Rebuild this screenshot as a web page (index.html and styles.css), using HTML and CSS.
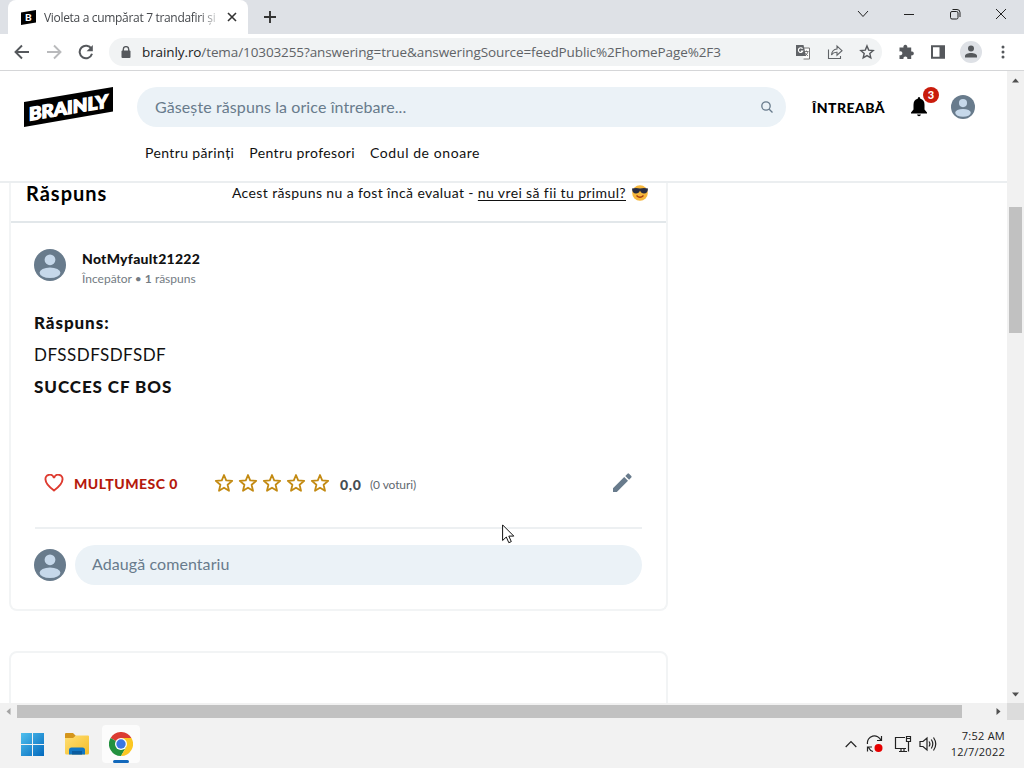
FILE: index.html
```html
<!DOCTYPE html>
<html lang="ro">

<head>
    <meta charset="UTF-8">
    <meta name="viewport" content="width=device-width, initial-scale=1.0">
    <title>Brainly</title>
    <link rel="stylesheet" href="styles.css">
</head>

<body>
    <!-- shared icons -->
    <svg hidden>
        <symbol id="avatar" viewBox="0 0 32 32">
            <circle cx="16" cy="16" r="16" fill="#687b8c" />
            <circle cx="16" cy="10.8" r="5.4" fill="#c6d8ea" />
            <ellipse cx="16" cy="23.8" rx="10.4" ry="5.3" fill="#c6d8ea" />
        </symbol>
        <symbol id="star" viewBox="0 0 20 20">
            <path d="M10 2l2.2 5.400 6 .5-4.600 3.900 1.400 6L10 14.700l-5 3.100 1.400-6L1.800 7.900l6-.5z" fill="none" stroke="#c38a12" stroke-width="1.800" stroke-linejoin="round" />
        </symbol>
    </svg>

    <div class="window">
        <div class="tabstrip">
            <div class="tab">
                <svg class="favicon" width="15" height="15" viewBox="0 0 15 15">
                    <path d="M0 2.500L15 0v12.500L0 15z" />
                    <text x="4" y="11.300">B</text>
                </svg>
                <span class="tab-title">Violeta a cumpărat 7 trandafiri și</span>
                <svg width="10" height="10" viewBox="0 0 10 10"><path d="M1 1l8 8M9 1L1 9" stroke="#333" stroke-width="1.600" /></svg>
            </div>
            <svg class="new-tab" width="14" height="14" viewBox="0 0 14 14"><path d="M7 1v12M1 7h12" stroke="#333" stroke-width="1.900" /></svg>
            <div class="window-buttons">
                <svg width="12" height="12" viewBox="0 0 12 12"><path d="M1 3l5 5.500L11 3" /></svg>
                <svg width="12" height="12" viewBox="0 0 12 12"><path d="M1 6.500h10" /></svg>
                <svg width="12" height="12" viewBox="0 0 12 12"><rect x="1.500" y="3.500" width="7.500" height="7.500" rx="1.500" /><path d="M3.500 1.500H8q3 0 3 3V9" /></svg>
                <svg width="12" height="12" viewBox="0 0 12 12"><path d="M1 1l10 10M11 1L1 11" /></svg>
            </div>
        </div>

        <div class="toolbar">
            <svg width="16" height="16" viewBox="0 0 16 16"><path d="M15 8H2M8 1.500L1.500 8 8 14.500" fill="none" stroke="#55585c" stroke-width="1.900" /></svg>
            <svg width="16" height="16" viewBox="0 0 16 16"><path d="M1 8h13M8 1.500L14.500 8 8 14.500" fill="none" stroke="#b9babc" stroke-width="1.900" /></svg>
            <svg width="16" height="16" viewBox="0 0 16 16"><path d="M13.400 4.800A6.300 6.300 0 1 0 14 9.800" fill="none" stroke="#55585c" stroke-width="2" /><path d="M14.800 1v6.200H8.600z" fill="#55585c" /></svg>
            <div class="omnibox">
                <svg width="10" height="12" viewBox="0 0 10 12"><path d="M2.300 5V3.300a2.700 2.700 0 0 1 5.400 0V5" fill="none" stroke="#55585c" stroke-width="1.400" /><rect x=".5" y="4.500" width="9" height="7.500" rx="1" fill="#55585c" /></svg>
                <div class="url"><b>brainly.ro</b>/tema/10303255?answering=true&amp;answeringSource=feedPublic%2FhomePage%2F3</div>
                <div class="omnibox-icons">
                    <svg width="16" height="16" viewBox="0 0 16 16">
                        <path d="M6 4h8.500v11H8.500" fill="#fff" stroke="#777" />
                        <path d="M1 1h7.500l2.500 11H1z" fill="#606367" />
                        <path d="M7.600 4.800a2.300 2.300 0 1 0 .2 2.300H5.800" fill="none" stroke="#fff" stroke-width="1.100" />
                        <path d="M9.500 7.500h4M11.500 6.500v1M13 7.500q-.5 3-3 4.500M10.500 9q1 2 2.500 3" fill="none" stroke="#666" stroke-width=".8" />
                    </svg>
                    <svg width="16" height="16" viewBox="0 0 16 16"><path d="M1.500 5.500v9h12V12M4.500 11q.5-5.500 5.500-6V2l5 4.700-5 4.500V8.300q-3.500-.3-5.500 2.700z" fill="none" stroke="#606367" stroke-width="1.100" /></svg>
                    <svg width="16" height="16" viewBox="0 0 16 16"><path d="M8 1.900l1.700 4.200 4.500.4-3.400 3 1 4.400L8 11.600l-3.800 2.300 1-4.400-3.400-3 4.500-.4z" fill="none" stroke="#55585c" stroke-width="1.400" /></svg>
                </div>
            </div>
            <div class="extensions">
                <svg width="16" height="16" viewBox="0 0 16 16"><path d="M1.500 3.500h4a2 2 0 1 1 3.700 0h4v4a2 2 0 1 1 0 3.800V15H9.300a2 2 0 1 0-3.800 0h-4v-4a2 2 0 1 0 0-3.600z" fill="#55585c" /></svg>
                <svg width="14" height="14" viewBox="0 0 14 14"><path d="M1 1.200h12v11.600H1z" fill="none" stroke="#55585c" stroke-width="2" /><path d="M8.500 1H13v12H8.500z" fill="#55585c" /></svg>
                <svg width="22" height="22" viewBox="0 0 22 22"><circle cx="11" cy="11" r="11" fill="#dee1e6" /><circle cx="11" cy="7.600" r="3" fill="#55585c" /><path d="M5 16.500v-1.600c0-4 12-4 12 0v1.600z" fill="#55585c" /></svg>
                <svg class="menu" width="4" height="14" viewBox="0 0 4 14" fill="#55585c"><circle cx="2" cy="2" r="1.500" /><circle cx="2" cy="7" r="1.500" /><circle cx="2" cy="12" r="1.500" /></svg>
            </div>
        </div>

        <div class="viewport">
            <div class="page">
                <header class="site-header">
                    <div class="header-top">
                        <svg class="logo" width="90" height="40" viewBox="0 0 90 40">
                            <path d="M0 15L89 0v24.500L0 40z" />
                            <text x="5" y="34.500" textLength="79" lengthAdjust="spacingAndGlyphs" transform="skewY(-9.600)">BRAINLY</text>
                        </svg>
                        <div class="search">
                            <span>Găsește răspuns la orice întrebare...</span>
                            <svg width="14" height="14" viewBox="0 0 14 14"><circle cx="6" cy="6" r="4.200" /><path d="M9.200 9.200l3.300 3.300" /></svg>
                        </div>
                        <a class="ask">ÎNTREABĂ</a>
                        <div class="bell">
                            <svg width="16" height="20" viewBox="0 0 16 20"><path d="M8 0q1.300 0 1.300 1.800 4.200 1.200 4.200 6v4.700L16 15.500v1H0v-1l2.500-3V7.800q0-4.800 4.200-6Q6.700 0 8 0zM6 17.500h4q-.4 1.700-2 1.700t-2-1.700z" /></svg>
                            <span class="badge">3</span>
                        </div>
                        <svg width="24" height="24"><use href="#avatar" /></svg>
                    </div>
                    <nav class="site-nav">
                        <a>Pentru părinți</a>
                        <a>Pentru profesori</a>
                        <a>Codul de onoare</a>
                    </nav>
                </header>

                <main class="content">
                    <div class="card">
                        <div class="card-head">
                            <h2>Răspuns</h2>
                            <p>Acest răspuns nu a fost încă evaluat - <u>nu vrei să fii tu primul?</u></p>
                            <svg width="16" height="16" viewBox="0 0 16 16">
                                <circle cx="8" cy="8" r="7.800" fill="#f6b73c" />
                                <path d="M0 3.500q4-1.200 8 0 4-1.200 8 0-.2 5-4 5Q9 8.500 8 5.500q-1 3-4 3-3.800 0-4-5z" fill="#282c40" />
                                <path d="M4.500 10.500q3.500 3.500 7 0" fill="none" stroke="#a43c12" stroke-width="1.400" />
                            </svg>
                        </div>

                        <div class="author">
                            <svg width="32" height="32"><use href="#avatar" /></svg>
                            <div>
                                <div class="author-name">NotMyfault21222</div>
                                <div class="author-info">Începător • <b>1</b> răspuns</div>
                            </div>
                        </div>

                        <div class="answer">
                            <p><b>Răspuns:</b></p>
                            <p>DFSSDFSDFSDF</p>
                            <p><b>SUCCES CF BOS</b></p>
                        </div>

                        <div class="actions">
                            <svg width="20" height="18" viewBox="0 0 20 18"><path d="M10 16.500C4 12 1.600 9.300 1.600 6A4.300 4.300 0 0 1 10 4a4.300 4.300 0 0 1 8.400 2c0 3.300-2.400 6-8.400 10.500z" fill="none" stroke="#de3b30" stroke-width="1.900" /></svg>
                            <span class="thanks">MULȚUMESC 0</span>
                            <div class="stars">
                                <svg width="20" height="20"><use href="#star" /></svg>
                                <svg width="20" height="20"><use href="#star" /></svg>
                                <svg width="20" height="20"><use href="#star" /></svg>
                                <svg width="20" height="20"><use href="#star" /></svg>
                                <svg width="20" height="20"><use href="#star" /></svg>
                            </div>
                            <span class="rating">0,0</span>
                            <span class="votes">(0 voturi)</span>
                            <svg class="edit" width="20" height="20" viewBox="0 0 20 20" fill="#687b8c"><path d="M1 15.200L12.200 4l3.800 3.800L4.800 19H1zM13.300 2.900L15.500.7q.8-.7 1.500 0L19.300 3q.7.700 0 1.500l-2.200 2.200z" /></svg>
                        </div>

                        <div class="comment">
                            <svg width="32" height="32"><use href="#avatar" /></svg>
                            <div class="comment-input">Adaugă comentariu</div>
                        </div>
                    </div>
                    <div class="card next-card"></div>
                </main>
            </div>

            <div class="scroll-y">
                <svg width="9" height="5" viewBox="0 0 9 5"><path d="M1 4.500L4.500.5 8 4.500z" /></svg>
                <div class="thumb-y"></div>
                <svg width="9" height="5" viewBox="0 0 9 5"><path d="M1 .5h7l-3.500 4z" /></svg>
            </div>
            <div class="scroll-x">
                <svg width="5" height="9" viewBox="0 0 5 9"><path class="disabled" d="M4.500 1v7L.5 4.500z" /></svg>
                <div class="thumb-x"></div>
                <svg width="5" height="9" viewBox="0 0 5 9"><path d="M.5 1v7l4-3.500z" /></svg>
            </div>
            <div class="scroll-corner"></div>
        </div>

        <div class="taskbar">
            <svg width="24" height="24" viewBox="0 0 24 24">
                <defs>
                    <linearGradient id="win" x1="0" y1="0" x2="1" y2="1">
                        <stop offset="0" stop-color="#50c0ee" />
                        <stop offset="1" stop-color="#0369bd" />
                    </linearGradient>
                    <linearGradient id="folder" x1="0" y1="0" x2="1" y2="1">
                        <stop offset="0" stop-color="#ffdf74" />
                        <stop offset="1" stop-color="#f5bd28" />
                    </linearGradient>
                </defs>
                <path d="M1 1h11v11H1zM13 1h11v11H13zM1 13h11v11H1zM13 13h11v11H13z" fill="url(#win)" />
            </svg>
            <svg width="26" height="24" viewBox="0 0 26 24">
                <path d="M1 2q0-1 1-1h7l3 3-3 3H1z" fill="#d4951c" />
                <path d="M1 6h8l3-2.500h12q1 0 1 1V21q0 1.500-1.500 1.500h-21Q1 22.500 1 21z" fill="url(#folder)" />
                <path d="M5 22.500V18q0-2.500 2.500-2.500h11Q21 15.500 21 18v4.500z" fill="#1177c4" />
                <path d="M8 19h10v3.500H8z" fill="#0a5c9f" />
            </svg>
            <div class="task-active">
                <svg width="24" height="24" viewBox="0 0 24 24">
                    <path d="M12 12L1.600 6A12 12 0 0 1 22.400 6z" fill="#db3b32" />
                    <path d="M12 12L1.600 6A12 12 0 0 0 12 24l5.200-9z" fill="#23913f" />
                    <path d="M12 6h10.400A12 12 0 0 1 12 24l5.200-9z" fill="#fbc722" />
                    <circle cx="12" cy="12" r="6" fill="#fff" />
                    <circle cx="12" cy="12" r="4.700" fill="#3b76e2" />
                </svg>
            </div>
            <div class="tray">
                <svg width="12" height="8" viewBox="0 0 12 8"><path d="M.7 7L6 1.500 11.300 7" /></svg>
                <svg width="17" height="18" viewBox="0 0 17 18"><path d="M1.500 9A7 7 0 0 1 15 5.500M15.500 1v4.500H11M7 16.500q-3-.8-4.500-4M1.500 16.500V12H6" /><circle class="dot" cx="12.500" cy="13" r="4" /></svg>
                <svg width="18" height="18" viewBox="0 0 18 18"><path d="M11 2.500H1.500v11H12M5 16.500h8M7 13.500v3M10 13.500v3M12.500 1.500h4v5h-4zM14.500 6.500v10M12.500 3.500h4" /></svg>
                <svg width="18" height="16" viewBox="0 0 18 16"><path d="M1 5.500h3L8 2v12l-4-3.500H1zM10 5.500q1.800 2.500 0 5M12.300 3.500q3 4.500 0 9M14.500 1.500q4.500 6.500 0 13" /></svg>
            </div>
            <div class="clock">
                <div>7:52 AM</div>
                <div>12/7/2022</div>
            </div>
        </div>
    </div>

    <svg class="cursor" width="13" height="20" viewBox="0 0 13 20"><path d="M.6.9v15.600l3.700-3.500 2.500 5.700 2.500-1.100-2.500-5.500h5z" fill="#fff" stroke="#111" /></svg>
</body>

</html>
```

FILE: styles.css
```css
* {
    margin: 0;
    padding: 0;
    box-sizing: border-box;
}

body {
    font-family: Lato, "Open Sans", sans-serif;
    color: #111;
    overflow: hidden;
}

svg {
    display: block;
    flex-shrink: 0;
}

svg[hidden] {
    display: none;
}

.window {
    display: flex;
    flex-direction: column;
    width: 1024px;
    height: 768px;
    background: #fff;
}

/* tabs */
.tabstrip {
    display: flex;
    align-items: center;
    height: 34px;
    padding-left: 8px;
    background: #dee1e6;
}

.tab {
    display: flex;
    align-items: center;
    width: 240px;
    height: 34px;
    padding: 0 11px 0 13px;
    border-radius: 8px 8px 0 0;
    background: #fff;
}

.favicon text {
    font: 900 10px Lato, sans-serif;
    fill: #fff;
}

.tab-title {
    width: 173px;
    margin: 0 10px 0 8px;
    font: 12px "Open Sans", sans-serif;
    letter-spacing: -0.32px;
    color: #45484c;
    white-space: nowrap;
    -webkit-mask-image: linear-gradient(to right, #000 155px, rgba(0, 0, 0, 0.2) 173px);
}

.new-tab {
    margin-left: 15px;
}

.window-buttons {
    display: flex;
    gap: 34px;
    margin: 0 17px 6px auto;
    fill: none;
    stroke: #222;
}

/* toolbar */
.toolbar {
    display: flex;
    align-items: center;
    gap: 16px;
    height: 37px;
    padding: 0 20px 0 14px;
    border-bottom: 1px solid #d5d6d8;
}

.omnibox {
    display: flex;
    align-items: center;
    width: 774px;
    height: 28px;
    margin-left: -1px;
    padding: 0 7px 0 12px;
    border-radius: 14px;
    background: #f1f3f4;
}

.url {
    margin-left: 11px;
    font: 13.5px "Open Sans", sans-serif;
    letter-spacing: -0.1px;
    color: #606367;
    white-space: nowrap;
}

.url b {
    font-weight: normal;
    color: #222;
}

.omnibox-icons {
    display: flex;
    gap: 16px;
    margin-left: auto;
}

.extensions {
    display: flex;
    align-items: center;
    gap: 15px;
    width: 106px;
    margin-left: auto;
}

.extensions svg:nth-child(2) {
    margin-left: 2px;
}

.extensions .menu {
    margin: 0 -1px 0 auto;
}

/* viewport with scrollbars */
.viewport {
    display: grid;
    grid-template-columns: 1007px 17px;
    grid-template-rows: 632px 17px;
}

.page {
    display: flex;
    flex-direction: column;
    overflow: hidden;
}

.scroll-y,
.scroll-x {
    display: flex;
    align-items: center;
    background: #f1f1f1;
    fill: #505050;
}

.scroll-y {
    flex-direction: column;
    padding: 7px 0 6px;
}

.thumb-y {
    width: 13px;
    height: 126px;
    margin: 124px 0 auto;
    background: #c1c1c1;
}

.scroll-x {
    padding: 0 6px;
}

.scroll-x .disabled {
    fill: #a3a3a3;
}

.thumb-x {
    width: 945px;
    height: 13px;
    margin: 0 auto 0 6px;
    background: #c1c1c1;
}

.scroll-corner {
    background: #dcdcdc;
}

/* site header */
.site-header {
    flex-shrink: 0;
    height: 112px;
    border-bottom: 2px solid #ebeef0;
}

.header-top {
    display: flex;
    align-items: center;
    height: 40px;
    margin-top: 16px;
    padding-left: 24px;
}

.logo text {
    font: 900 18px Lato, sans-serif;
    fill: #fff;
    stroke: #fff;
    stroke-width: 1.3px;
}

.search {
    display: flex;
    align-items: center;
    justify-content: space-between;
    width: 649px;
    height: 40px;
    margin-left: 23px;
    padding: 0 12px 1px 18px;
    border-radius: 20px;
    background: #ebf2f7;
    font-size: 16px;
    letter-spacing: 0.1px;
    color: #687b8c;
}

.search svg {
    fill: none;
    stroke: #687b8c;
    stroke-width: 1.3;
}

.ask {
    width: 73px;
    margin: 0 26px;
    font-size: 14px;
    font-weight: 900;
    letter-spacing: 0.45px;
    white-space: nowrap;
    color: #000;
}

.bell {
    position: relative;
    margin-right: 24px;
}

.badge {
    position: absolute;
    top: -10px;
    left: 12px;
    width: 16px;
    height: 16px;
    border-radius: 50%;
    background: #c91c0c;
    font-size: 11px;
    font-weight: 900;
    line-height: 16px;
    text-align: center;
    color: #fff;
}

.site-nav {
    display: flex;
    gap: 15px;
    padding: 17px 0 0 145px;
    font-size: 14px;
    line-height: 18px;
    letter-spacing: 0.38px;
}

.site-nav a:last-child {
    letter-spacing: 0.58px;
}

/* answer */
.content {
    flex: 1;
    overflow: hidden;
    padding-left: 9px;
}

.card {
    width: 659px;
    height: 428px;
    border: 2px solid #f2f4f5;
    border-top: none;
    border-radius: 0 0 8px 8px;
}

.card-head {
    display: flex;
    align-items: center;
    height: 40px;
    padding: 0 18px 18px 15px;
    border-bottom: 2px solid #e2e7ea;
}

.card-head h2 {
    font-size: 20px;
    line-height: 20px;
    letter-spacing: 1px;
    color: #000;
}

.card-head p {
    margin: -1px 6px 0 auto;
    font-size: 14px;
    letter-spacing: 0.38px;
}

.card-head u {
    text-underline-offset: 2px;
}

.author {
    display: flex;
    align-items: center;
    gap: 16px;
    height: 32px;
    margin: 26px 0 0 23px;
}

.author-name {
    margin-top: 7px;
    font-size: 14px;
    font-weight: 900;
    line-height: 20px;
    letter-spacing: 0.27px;
}

.author-info {
    font-size: 12px;
    line-height: 20px;
    color: #737b83;
}

.answer {
    margin: 26px 0 0 23px;
    font-size: 17px;
    line-height: 32px;
    letter-spacing: 0.5px;
}

.answer b {
    font-weight: 900;
    letter-spacing: 0.93px;
}

.actions {
    display: flex;
    align-items: center;
    height: 24px;
    margin: 68px 34px 0 33px;
}

.thanks {
    width: 104px;
    margin-left: 10px;
    font-size: 14px;
    font-weight: 900;
    letter-spacing: 0.5px;
    white-space: nowrap;
    color: #b5190c;
}

.stars {
    display: flex;
    gap: 4px;
    margin-left: 36px;
}

.rating {
    width: 22px;
    margin: 2px 0 0 10px;
    font-size: 14px;
    font-weight: 900;
    letter-spacing: 0.7px;
    color: #454c52;
}

.votes {
    margin: 2px 0 0 8px;
    font-size: 12px;
    letter-spacing: -0.1px;
    color: #626970;
}

.edit {
    margin-left: auto;
}

.comment {
    display: flex;
    align-items: center;
    gap: 9px;
    margin: 32px 24px 0 24px;
    padding-top: 16px;
    border-top: 2px solid #edf0f2;
}

.comment > svg {
    margin-left: -1px;
}

.comment-input {
    flex: 1;
    height: 40px;
    padding-left: 17px;
    border-radius: 20px;
    background: #ebf2f7;
    font-size: 16px;
    line-height: 38px;
    letter-spacing: 0.08px;
    color: #687b8c;
}

.next-card {
    height: 80px;
    margin-top: 40px;
    border-top: 2px solid #f2f4f5;
    border-radius: 8px 8px 0 0;
}

/* taskbar */
.taskbar {
    display: flex;
    align-items: center;
    height: 48px;
    padding: 0 19px 0 20px;
    background: #f2f2f2;
    font-family: "Open Sans", sans-serif;
}

.taskbar > svg {
    margin-right: 20px;
}

.task-active {
    display: flex;
    justify-content: center;
    align-items: center;
    position: relative;
    width: 38px;
    height: 38px;
    margin-left: -8px;
    border-radius: 4px;
    background: #fcfcfc;
}

.task-active::after {
    content: "";
    position: absolute;
    bottom: 0;
    left: 11px;
    width: 16px;
    height: 3px;
    border-radius: 2px;
    background: #1268bb;
}

.tray {
    display: flex;
    align-items: center;
    gap: 9px;
    margin-left: auto;
    fill: none;
    stroke: #222;
    stroke-width: 1.2;
}

.tray svg:nth-child(3) {
    margin: 0 -2px 0 2px;
}

.tray .dot {
    fill: #e60000;
    stroke: none;
}

.clock {
    width: 55px;
    margin-left: 13px;
    font-size: 11px;
    line-height: 16px;
    letter-spacing: 0.25px;
    text-align: right;
    white-space: nowrap;
    color: #222;
}

.cursor {
    position: absolute;
    top: 524px;
    left: 502px;
}
```
